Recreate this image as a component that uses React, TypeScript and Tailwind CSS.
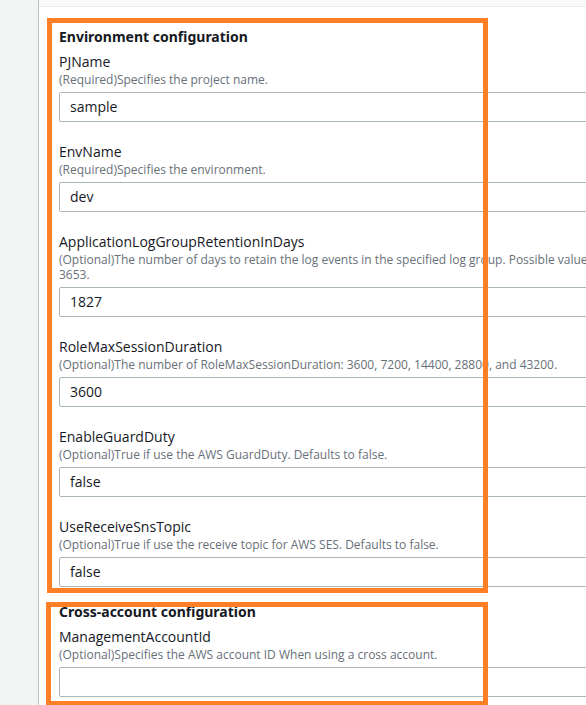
type Field = { name: string; description: string; value: string };

const environmentFields: Field[] = [
  { name: 'PJName', description: '(Required)Specifies the project name.', value: 'sample' },
  { name: 'EnvName', description: '(Required)Specifies the environment.', value: 'dev' },
  {
    name: 'ApplicationLogGroupRetentionInDays',
    description:
      '(Optional)The number of days to retain the log events in the specified log group. Possible values are: 1, 3, 5, 7, 14, 30, 60, 90, 120, 150, 180, 365, 400, 545, 731, 1827, and\n3653.',
    value: '1827',
  },
  {
    name: 'RoleMaxSessionDuration',
    description: '(Optional)The number of RoleMaxSessionDuration: 3600, 7200, 14400, 28800, and 43200.',
    value: '3600',
  },
  {
    name: 'EnableGuardDuty',
    description: '(Optional)True if use the AWS GuardDuty. Defaults to false.',
    value: 'false',
  },
  {
    name: 'UseReceiveSnsTopic',
    description: '(Optional)True if use the receive topic for AWS SES. Defaults to false.',
    value: 'false',
  },
];

const accountFields: Field[] = [
  {
    name: 'ManagementAccountId',
    description: '(Optional)Specifies the AWS account ID When using a cross account.',
    value: '',
  },
];

function ParameterGroup({ title, fields }: { title: string; fields: Field[] }) {
  return (
    <section>
      <h2 className="mb-[3px] font-['Noto_Sans',sans-serif] text-[14px] leading-[22px] font-bold">{title}</h2>
      <div className="flex flex-col gap-[19px]">
        {fields.map((field) => (
          <div key={field.name}>
            <label htmlFor={field.name} className="block text-[14px] leading-[22px]">
              {field.name}
            </label>
            <p
              id={`${field.name}-description`}
              className="-mt-px mb-[5px] text-[12px] leading-[15px] whitespace-pre-line text-[#687078]"
            >
              {field.description}
            </p>
            <input
              id={field.name}
              type="text"
              aria-describedby={`${field.name}-description`}
              defaultValue={field.value}
              className="block h-[30px] w-full rounded-xs border border-[#aab7b8] bg-white px-2.5 pb-0.5 text-[14px]"
            />
          </div>
        ))}
      </div>
    </section>
  );
}

export default function App() {
  return (
    <div className="relative flex min-h-screen overflow-hidden bg-[#f2f3f3] pl-[38px] font-['Open_Sans','Noto_Sans',sans-serif] text-[#16191f]">
      <main className="min-w-[1120px] flex-1 border-l border-[#bcc3c4] bg-white">
        <div className="h-[7px] border-b border-[#eaeded] bg-[#fafafa]" />
        <form className="flex flex-col gap-3.5 px-5 pt-[19px]">
          <ParameterGroup title="Environment configuration" fields={environmentFields} />
          <ParameterGroup title="Cross-account configuration" fields={accountFields} />
        </form>
      </main>
      <div className="pointer-events-none absolute top-[18px] left-[47px] h-[575px] w-[441px] border-5 border-[#ff7f27]" />
      <div className="pointer-events-none absolute top-[602px] left-[46px] h-[104px] w-[442px] border-5 border-[#ff7f27]" />
    </div>
  );
}
